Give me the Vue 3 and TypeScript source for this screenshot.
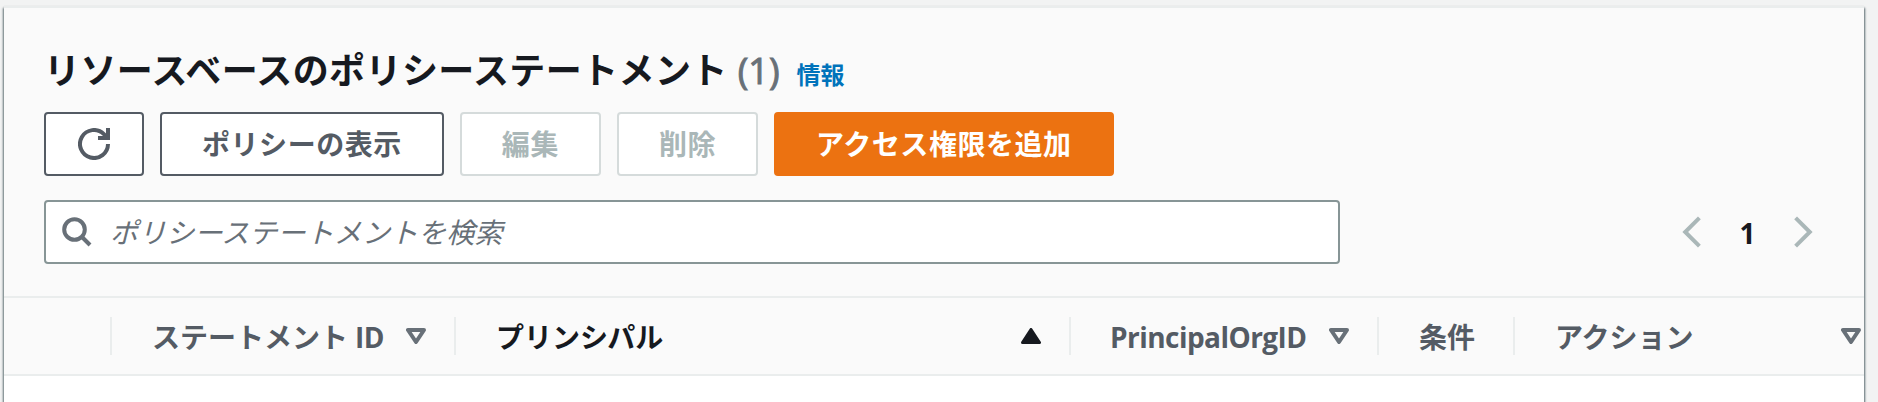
<script setup lang="ts">
import { ref } from 'vue'

type Sort = 'none' | 'down' | 'up'

interface Column {
  key: string
  label: string
  latin?: string
  sort: Sort
}

interface Action {
  label: string
  kind: 'normal' | 'disabled' | 'primary'
}

const count = ref(1)
const page = ref(1)
const query = ref('')

const actions: Action[] = [
  { label: 'ポリシーの表示', kind: 'normal' },
  { label: '編集', kind: 'disabled' },
  { label: '削除', kind: 'disabled' },
  { label: 'アクセス権限を追加', kind: 'primary' },
]

const columns: Column[] = [
  { key: 'select', label: '', sort: 'none' },
  { key: 'statement', label: 'ステートメント', latin: 'ID', sort: 'down' },
  { key: 'principal', label: 'プリンシパル', sort: 'up' },
  { key: 'org', label: '', latin: 'PrincipalOrgID', sort: 'down' },
  { key: 'condition', label: '条件', sort: 'none' },
  { key: 'action', label: 'アクション', sort: 'down' },
]
</script>

<template>
  <div class="page">
    <section class="panel">
      <header class="head">
        <div class="title-row">
          <h2 class="title">リソースベースのポリシーステートメント</h2>
          <span class="count">({{ count }})</span>
          <a class="info">情報</a>
        </div>
        <div class="actions">
          <button class="btn refresh" type="button" aria-label="更新">
            <svg width="32" height="32" viewBox="0 0 16 16" fill="none" stroke="currentColor" stroke-width="2">
              <path d="M15 8a7 7 0 1 1-2.05-4.95L14.6 4.8" />
              <path d="M15 0v5h-5" />
            </svg>
          </button>
          <button v-for="a in actions" :key="a.label" class="btn" :class="a.kind" type="button">{{ a.label }}</button>
        </div>
        <div class="filter-row">
          <label class="search">
            <svg class="lens" width="30" height="30" viewBox="0 0 30 30" fill="none" stroke="currentColor" stroke-width="4">
              <circle cx="12.5" cy="12.5" r="10.3" />
              <path d="M19.5 19.5l8.5 8.5" />
            </svg>
            <input v-model="query" type="text" placeholder="ポリシーステートメントを検索" />
          </label>
          <nav class="pager">
            <svg width="20" height="32" viewBox="0 0 20 32" fill="none" stroke="currentColor" stroke-width="4">
              <path d="M17.4 1.8L3.2 16l14.2 14.2" />
            </svg>
            <span class="num">{{ page }}</span>
            <svg width="20" height="32" viewBox="0 0 20 32" fill="none" stroke="currentColor" stroke-width="4">
              <path d="M2.6 1.8L16.8 16 2.6 30.2" />
            </svg>
          </nav>
        </div>
      </header>
      <div class="columns">
        <div v-for="c in columns" :key="c.key" class="col" :class="[c.key, { active: c.sort === 'up' }]">
          <span class="label">{{ c.label }}<span v-if="c.latin" class="latin">{{ c.latin }}</span></span>
          <svg v-if="c.sort === 'down'" class="sort" width="20" height="16" viewBox="0 0 20 16" fill="none" stroke="currentColor" stroke-width="4" stroke-linejoin="round">
            <path d="M2 2h16l-8 12z" />
          </svg>
          <svg v-else-if="c.sort === 'up'" class="sort" width="20" height="16" viewBox="0 0 20 16" fill="currentColor" stroke="currentColor" stroke-width="3" stroke-linejoin="round">
            <path d="M10 1.5L18.5 14.5h-17z" />
          </svg>
        </div>
      </div>
    </section>
  </div>
</template>

<style>
body {
  background: #f2f3f3;
  overflow: hidden;
}
</style>

<style scoped>
* {
  box-sizing: border-box;
}
.page {
  height: 402px;
  padding: 6px 14px 0 4px;
  overflow: hidden;
  background: #f2f3f3;
  font-family: "Noto Sans CJK JP", sans-serif;
  color: #16191f;
}
.panel {
  height: 440px;
  background: #fff;
  border-top: 2px solid #eaeded;
  box-shadow: 1px 2px 2px 0 rgba(0, 28, 36, 0.6), -1px 2px 2px 0 rgba(0, 28, 36, 0.55), 0 0 1px 0 rgba(0, 28, 36, 0.1);
}
.head {
  height: 290px;
  padding: 34px 40px 0;
  background: #fafafa;
  border-bottom: 2px solid #eaeded;
}
.title-row {
  display: flex;
  align-items: baseline;
  height: 52px;
  line-height: 52px;
}
.title {
  margin: 0;
  font-size: 36px;
  font-weight: 700;
  line-height: 52px;
  letter-spacing: 0.4px;
}
.count {
  margin-left: 10px;
  font: 500 36px/52px "Open Sans", sans-serif;
  -webkit-text-stroke: 1px #687078;
  color: #687078;
}
.info {
  margin-left: 17px;
  font-size: 24px;
  font-weight: 700;
  color: #0073bb;
}
.actions {
  display: flex;
  gap: 16px;
  margin-top: 18px;
}
.btn {
  height: 64px;
  padding: 0 40px 3px;
  border: 2px solid #545b64;
  border-radius: 4px;
  background: #fff;
  color: #545b64;
  font: 700 28px/40px "Noto Sans CJK JP", sans-serif;
  letter-spacing: 0.55px;
  white-space: nowrap;
}
.refresh {
  width: 100px;
  padding: 0;
  display: flex;
  align-items: center;
  justify-content: center;
}
.disabled {
  color: #aab7b8;
  border-color: #d5dbdb;
}
.primary {
  color: #fff;
  background: #ec7211;
  border-color: #ec7211;
}
.filter-row {
  display: flex;
  justify-content: space-between;
  align-items: center;
  margin-top: 24px;
}
.search {
  display: flex;
  align-items: center;
  width: 1296px;
  height: 64px;
  padding-left: 16px;
  border: 2px solid #879596;
  border-radius: 4px;
  background: #fff;
}
.lens {
  color: #687078;
}
.search input {
  flex: 1;
  height: 40px;
  margin: 0 0 2px 18px;
  padding: 0;
  border: 0;
  outline: 0;
  background: none;
  font: 400 28px/40px "Noto Sans CJK JP", sans-serif;
  letter-spacing: 0.15px;
}
.search input::placeholder {
  color: #687078;
  font-style: italic;
  opacity: 1;
}
.pager {
  display: flex;
  align-items: center;
  margin-right: 11px;
  color: #aab7b8;
}
.num {
  width: 91px;
  padding-top: 2px;
  text-align: center;
  color: #16191f;
  font: 700 28px/40px "Open Sans", sans-serif;
}
.columns {
  display: grid;
  grid-template-columns: 108px 344px 615px 308px 136px 1fr;
  align-items: center;
  height: 78px;
  background: #fafafa;
  border-bottom: 2px solid #eaeded;
}
.col {
  display: flex;
  align-items: center;
  justify-content: space-between;
  height: 38px;
  padding: 0 28px 0 40px;
  border-right: 2px solid #eaeded;
  color: #545b64;
  font-size: 28px;
  font-weight: 700;
  line-height: 38px;
  white-space: nowrap;
}
.col.active {
  color: #16191f;
}
.col.action {
  padding-right: 3px;
  border-right: 0;
}
.sort {
  flex: none;
  color: #687078;
}
.active .sort {
  color: #16191f;
}
.latin {
  font-family: "Open Sans", sans-serif;
  letter-spacing: -0.55px;
}
.statement .latin {
  margin-left: 7px;
}
.org .latin {
  margin-left: -1px;
}
</style>
